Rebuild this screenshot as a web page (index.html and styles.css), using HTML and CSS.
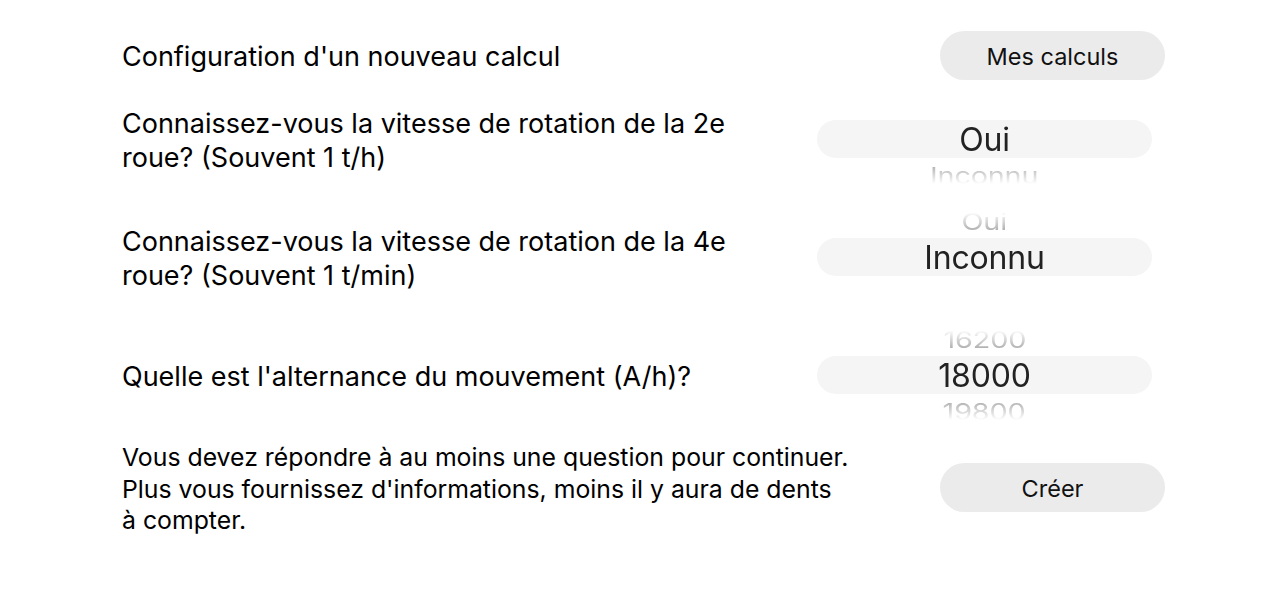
FILE: index.html
```html
<!DOCTYPE html>
<html lang="fr">
<head>
  <meta charset="UTF-8">
  <meta name="viewport" content="width=device-width, initial-scale=1.0">
  <title>Nouveau calcul</title>
  <link rel="stylesheet" href="styles.css">
</head>
<body>
  <div class="page">
    <div class="row title-row">
      <div class="label">Configuration d'un nouveau calcul</div>
      <button class="btn">Mes calculs</button>
    </div>

    <div class="row q-row">
      <div class="label">Connaissez-vous la vitesse de rotation de la 2e<br>roue? (Souvent 1 t/h)</div>
      <div class="picker">
        <div class="pill"></div>
        <div class="wheel">
          <div class="opt"></div>
          <div class="opt sel">Oui</div>
          <div class="opt dim">Inconnu</div>
        </div>
      </div>
    </div>

    <div class="row q-row">
      <div class="label">Connaissez-vous la vitesse de rotation de la 4e<br>roue? (Souvent 1 t/min)</div>
      <div class="picker">
        <div class="pill"></div>
        <div class="wheel">
          <div class="opt dim">Oui</div>
          <div class="opt sel">Inconnu</div>
          <div class="opt"></div>
        </div>
      </div>
    </div>

    <div class="row q-row">
      <div class="label">Quelle est l'alternance du mouvement (A/h)?</div>
      <div class="picker">
        <div class="pill"></div>
        <div class="wheel">
          <div class="opt dim">16200</div>
          <div class="opt sel">18000</div>
          <div class="opt dim">19800</div>
        </div>
      </div>
    </div>

    <div class="row foot-row">
      <div class="note">Vous devez répondre à au moins une question pour continuer.<br>Plus vous fournissez d'informations, moins il y aura de dents<br>à compter.</div>
      <button class="btn">Créer</button>
    </div>
  </div>
</body>
</html>
```

FILE: styles.css
```css
body { margin: 0; background: #fff; font-family: Inter, "Noto Sans", sans-serif; color: #000; }
.page { width: 1043px; margin-left: 122px; padding-top: 31px; }
.row { display: flex; align-items: center; justify-content: space-between; }
.label { font-size: 27px; line-height: 34px; padding-top: 3px; }
.title-row { height: 49px; }
.q-row { height: 90px; margin-right: 13px; }
.q-row:nth-of-type(2) { margin-top: 14px; }
.q-row:nth-of-type(3), .q-row:nth-of-type(4) { margin-top: 28px; }
.foot-row { margin-top: 19px; }
.note { font-size: 24.8px; line-height: 31.5px; padding-top: 3px; }
.btn { width: 225px; height: 49px; border: none; border-radius: 25px; background: #ebebec; font-family: inherit; font-size: 23.5px; color: #111; padding: 2px 0 0; }
.picker { position: relative; width: 335px; height: 90px; }
.pill { position: absolute; left: 0; right: 0; top: 26px; height: 38px; border-radius: 19px; background: #f5f5f6; }
.wheel { position: relative; height: 90px; overflow: hidden; display: flex; flex-direction: column; justify-content: center; align-items: center;
  -webkit-mask-image: linear-gradient(to bottom, transparent 0, #000 30%, #000 70%, transparent 100%);
  mask-image: linear-gradient(to bottom, transparent 0, #000 30%, #000 70%, transparent 100%); }
.opt { height: 36px; flex: none; line-height: 37px; font-size: 32px; color: #222; letter-spacing: -0.2px; }
.opt.dim { color: #8a8a8a; transform: scale(0.9, 0.72); }
```
